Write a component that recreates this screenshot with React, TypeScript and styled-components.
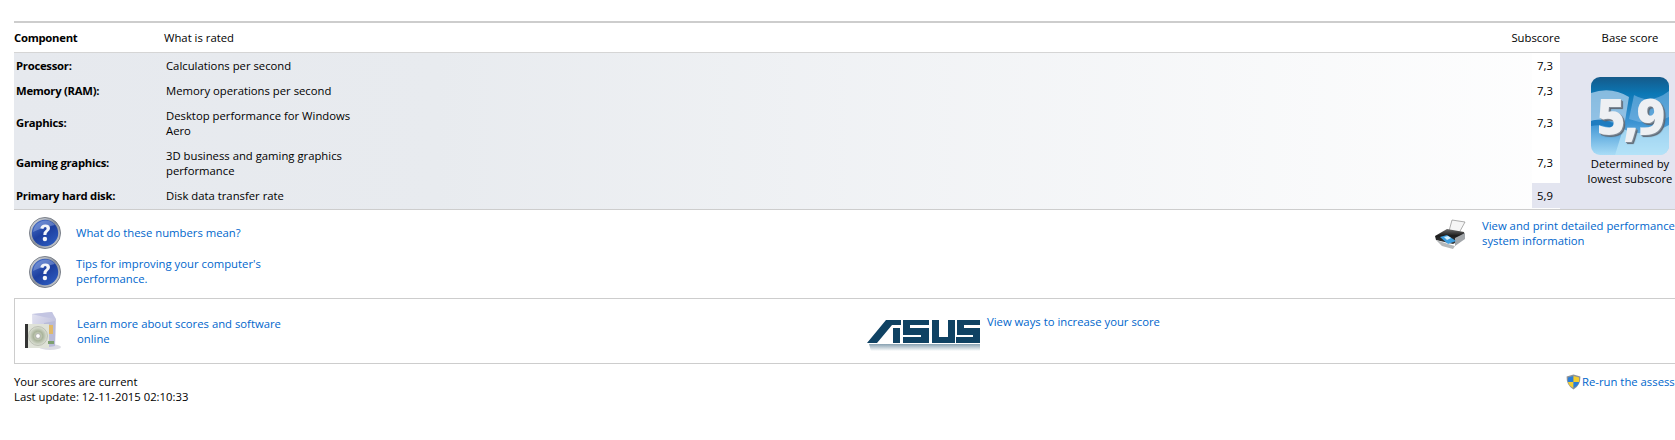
import React from "react";

import styled, { createGlobalStyle } from "styled-components";

const GlobalStyle = createGlobalStyle`
  html, body {
    margin: 0;
    padding: 0;
    background: #fff;
    overflow: hidden;
  }
  body {
    font-family: "Open Sans", "Noto Sans", sans-serif;
    font-size: 11.3px;
    line-height: 15px;
    color: #000;
  }
  svg {
    flex: none;
    display: block;
  }
`;

const Page = styled.div`
  width: 1700px;
  height: 440px;
  padding: 21px 0 0 14px;
  box-sizing: border-box;
  overflow: hidden;
`;

const ScoreTable = styled.div`
  display: grid;
  grid-template-columns: 150px 202px 1fr 28px 140px;
  grid-template-rows: 30px 25px 25px 40px 40px 25px;
  padding-bottom: 1px;
  border-top: 2px solid #cdcdcd;
  border-bottom: 1px solid #cdcdcd;
  background:
    linear-gradient(#fff, #fff) top / 100% 30px no-repeat,
    linear-gradient(90deg, #e6e9ee 0%, #e8ebef 25%, #fff 96%);
`;

const HeadCell = styled.div<{ $bold?: boolean; $align?: string }>`
  display: flex;
  align-items: center;
  justify-content: ${(p) => p.$align || "flex-start"};
  white-space: nowrap;
  font-weight: ${(p) => (p.$bold ? 700 : 400)};
  letter-spacing: ${(p) => (p.$bold ? "-0.27px" : "0")};
  border-bottom: 1px solid #d5d5d5;
`;

const NameCell = styled.div<{ $tall?: boolean }>`
  display: flex;
  align-items: center;
  padding: 0 0 ${(p) => (p.$tall ? "1px" : "0")} 2px;
  font-weight: 700;
  letter-spacing: -0.27px;
`;

const RatedCell = styled.div`
  display: flex;
  align-items: center;
  padding-left: 2px;
`;

const Filler = styled.div``;

const ScoreCell = styled.div<{ $lowest?: boolean; $tall?: boolean }>`
  display: flex;
  align-items: center;
  padding: 0 0 ${(p) => (p.$tall ? "1px" : "0")} 5px;
  background: ${(p) => (p.$lowest ? "#e3e5f0" : "#fff")};
`;

const BasePanel = styled.div`
  grid-column: 5;
  grid-row: 2 / span 5;
  background: #e3e5f0;
  display: flex;
  flex-direction: column;
  align-items: center;
  padding-top: 24px;
  margin-bottom: -1px;
  text-align: center;
`;

const Tile = styled.div`
  position: relative;
  width: 78px;
  height: 78px;
  border-radius: 9px;
  overflow: hidden;
  margin-bottom: 1px;
`;

const TileNumber = styled.span`
  position: absolute;
  left: 0;
  right: 0;
  top: 8px;
  text-align: center;
  font-family: "Open Sans", sans-serif;
  font-weight: 800;
  font-size: 49px;
  line-height: 62px;
  letter-spacing: -2px;
  color: #eef0f3;
  text-shadow: 1px 1px 0 #7f8a96, 2px 2px 1px #5c6570;
`;

const LinkRows = styled.div`
  display: flex;
  justify-content: space-between;
  height: 88px;
`;

const LinkColumn = styled.div`
  display: flex;
  flex-direction: column;
  gap: 7px;
  padding: 7px 0 0 15px;
`;

const LinkItem = styled.div`
  display: flex;
  align-items: center;
  gap: 15px;
  height: 32px;

  a {
    margin-top: -2px;
  }
`;

const PrintLink = styled.div`
  display: flex;
  align-items: flex-start;
  gap: 14px;
  padding-top: 9px;
  width: 266px;
  flex: none;
  white-space: nowrap;

  a {
    margin-top: -1px;
  }
`;

const Anchor = styled.a<{ $width?: number }>`
  color: #0066cc;
  text-decoration: none;
  display: block;
  max-width: ${(p) => (p.$width ? `${p.$width}px` : "none")};
`;

const PromoBox = styled.div`
  display: flex;
  height: 64px;
  border: 1px solid #cdcdcd;
  border-right: none;
  padding-left: 9px;
`;

const PromoLeft = styled.div`
  display: flex;
  align-items: center;
  gap: 15px;
  width: 843px;
  flex: none;
`;

const PromoRight = styled.div`
  display: flex;
  align-items: flex-start;
  gap: 7px;
  padding-top: 15px;

  svg {
    margin-top: 5px;
  }
`;

const Footer = styled.div`
  display: flex;
  justify-content: space-between;
  padding-top: 10px;
`;

const Rerun = styled.div`
  display: flex;
  align-items: flex-start;
  gap: 1px;
  width: 134px;
  white-space: nowrap;
  flex: none;
`;

const HelpIcon = () => (
  <svg width="32" height="32" viewBox="0 0 32 32">
    <defs>
      <linearGradient id="helpRing" x1="0" y1="0" x2="1" y2="1">
        <stop offset="0" stopColor="#e4e6ea" />
        <stop offset="0.5" stopColor="#8b919b" />
        <stop offset="1" stopColor="#d5d8dd" />
      </linearGradient>
      <linearGradient id="helpFill" x1="0.1" y1="0" x2="0.8" y2="1">
        <stop offset="0" stopColor="#4a73cc" />
        <stop offset="0.5" stopColor="#1d3f9f" />
        <stop offset="1" stopColor="#2d5cc0" />
      </linearGradient>
    </defs>
    <circle cx="16" cy="16" r="15.6" fill="url(#helpRing)" stroke="#5c636e" strokeWidth="0.7" />
    <circle cx="16" cy="16" r="13.2" fill="url(#helpFill)" />
    <path d="M4 15 A12.5 12.5 0 0 1 26 8 Q14 10 4 15Z" fill="#9db4e6" opacity="0.45" />
    <path
      d="M11.3 11.2 Q12 7.4 16.3 7.4 Q21 7.6 21 11.2 Q21 13.6 18.7 15 Q17.4 15.9 17.4 18 L14.3 18 Q14.1 15 16.2 13.6 Q17.8 12.5 17.6 11.2 Q17.3 9.9 16 10 Q14.8 10 14.4 11.9Z"
      fill="#f4f6fa"
    />
    <circle cx="15.9" cy="22" r="2.2" fill="#f4f6fa" />
  </svg>
);

const PrinterIcon = () => (
  <svg width="34" height="30" viewBox="0 0 34 30">
    <defs>
      <linearGradient id="printerBody" x1="0" y1="0" x2="0" y2="1">
        <stop offset="0" stopColor="#6c6c6c" />
        <stop offset="0.45" stopColor="#1c1c1c" />
        <stop offset="1" stopColor="#3c3f42" />
      </linearGradient>
    </defs>
    <path d="M18 1 L31 3 L25 14 L15 12Z" fill="#f5f5f5" stroke="#8d8d8d" strokeWidth="0.7" />
    <path d="M1 17 L13 10 L30 13 L31 19 L19 25 L2 21Z" fill="url(#printerBody)" />
    <path d="M21 19 L31 14 V20 L21 27Z" fill="#a2a6aa" />
    <path d="M6 18 L13 16 L22 22 L14 25Z" fill="#3d9ee0" />
    <path d="M10 18 L14 17 L17 19 L13 21Z" fill="#d5effc" />
    <path d="M2 21 L14 25 L21 27 L19 30 L8 27Z" fill="#b5b8ba" />
  </svg>
);

const BoxIcon = () => (
  <svg width="38" height="40" viewBox="0 0 38 40">
    <defs>
      <linearGradient id="boxFace" x1="0" y1="0" x2="1" y2="1">
        <stop offset="0" stopColor="#e4e4f2" />
        <stop offset="1" stopColor="#aeb0d2" />
      </linearGradient>
      <radialGradient id="boxDisc">
        <stop offset="0" stopColor="#eef2e0" />
        <stop offset="0.5" stopColor="#a9b39b" />
        <stop offset="1" stopColor="#dfe3d8" />
      </radialGradient>
    </defs>
    <ellipse cx="26" cy="36" rx="11" ry="3" fill="#dcdce4" />
    <path d="M8 3 L28 1 L32 8 L31 35 L9 37Z" fill="url(#boxFace)" />
    <path d="M8 3 L20 6 L31 8 L28 1Z" fill="#c3c5e2" />
    <path d="M20 12 L31 10 L31 35 L22 36Z" fill="#b9bbd8" />
    <rect x="1" y="13" width="24" height="24" fill="#dfe2d8" />
    <rect x="1" y="13" width="3" height="24" fill="#333" />
    <circle cx="14" cy="25" r="9.5" fill="url(#boxDisc)" stroke="#9a9f90" strokeWidth="0.5" />
    <circle cx="14" cy="25" r="2.4" fill="#fff" stroke="#888" strokeWidth="0.6" />
    <rect x="25" y="14" width="4" height="9" fill="#e0b96a" />
    <rect x="24" y="30" width="6" height="3" fill="#7fa070" />
  </svg>
);

const ShieldIcon = () => (
  <svg width="15" height="16" viewBox="0 0 15 16">
    <path d="M7.5 0.4 L14.4 2.4 Q14.8 11 7.5 15.6 Q0.2 11 0.6 2.4Z" fill="#8f9499" />
    <path d="M7.5 2 V8 H2 Q1.8 5.5 2 3.4Z" fill="#2c7fd8" />
    <path d="M7.5 2 L13 3.4 Q13.2 5.5 13 8 H7.5Z" fill="#f4cf2f" />
    <path d="M7.5 8 H2 Q2.8 11.8 7.5 14Z" fill="#f4cf2f" />
    <path d="M7.5 8 H13 Q12.2 11.8 7.5 14Z" fill="#2c7fd8" />
  </svg>
);

const AsusLogo = () => (
  <svg width="113" height="32" viewBox="0 0 113 32">
    <defs>
      <linearGradient id="asusFade" x1="0" y1="0" x2="0" y2="1">
        <stop offset="0" stopColor="#0f4263" stopOpacity="0.5" />
        <stop offset="1" stopColor="#0f4263" stopOpacity="0" />
      </linearGradient>
    </defs>
    <g fill="#0f4263">
      <path d="M0 24 L19 1 H34 V6 H25 L10 24Z" />
      <rect x="26" y="9" width="7" height="15" />
      <path d="M36 1 H62 V6 H43 V9 H62 V24 H36 V18 H54 V16 H36Z" />
      <path d="M65 1 H72 V18 H81 V1 H88 V24 H65Z" />
      <path d="M90 1 H113 V6 H97 V9 H113 V24 H89 V18 H106 V16 H90Z" />
    </g>
    <path d="M2 25 H113 V32 H4Z" fill="url(#asusFade)" />
  </svg>
);

const WindowsSwoosh = () => (
  <svg width="78" height="78" viewBox="0 0 78 78">
    <defs>
      <linearGradient id="tileBg" x1="0" y1="0" x2="0" y2="1">
        <stop offset="0" stopColor="#155a8a" />
        <stop offset="0.22" stopColor="#0b78b6" />
        <stop offset="0.6" stopColor="#3f95d4" />
        <stop offset="1" stopColor="#a9dcf6" />
      </linearGradient>
    </defs>
    <rect width="78" height="78" fill="url(#tileBg)" />
    <path d="M0 16 Q20 9 38 20 L33 50 Q16 40 0 44Z" fill="#a8cdea" opacity="0.8" />
    <path d="M43 18 Q60 28 78 14 V40 Q58 50 38 42Z" fill="#7fb8e4" opacity="0.6" />
    <path d="M0 44 Q14 40 28 50 L27 54 Q12 46 0 49Z" fill="#1f7cc0" />
    <path d="M32 52 Q54 62 78 48 V78 H24Z" fill="#b8e4f8" opacity="0.75" />
  </svg>
);

const rows = [
  { name: "Processor:", rated: "Calculations per second", score: "7,3" },
  { name: "Memory (RAM):", rated: "Memory operations per second", score: "7,3" },
  { name: "Graphics:", rated: "Desktop performance for Windows Aero", score: "7,3", tall: true },
  { name: "Gaming graphics:", rated: "3D business and gaming graphics performance", score: "7,3", tall: true },
  { name: "Primary hard disk:", rated: "Disk data transfer rate", score: "5,9", lowest: true },
];

const App = () => {
  return (
    <Page>
      <GlobalStyle />
      <ScoreTable>
        <HeadCell $bold>Component</HeadCell>
        <HeadCell>What is rated</HeadCell>
        <HeadCell />
        <HeadCell $align="flex-end">Subscore</HeadCell>
        <HeadCell $align="center">Base score</HeadCell>
        {rows.map((row) => (
          <React.Fragment key={row.name}>
            <NameCell $tall={row.tall}>{row.name}</NameCell>
            <RatedCell>{row.rated}</RatedCell>
            <Filler />
            <ScoreCell $lowest={row.lowest} $tall={row.tall}>{row.score}</ScoreCell>
          </React.Fragment>
        ))}
        <BasePanel>
          <Tile>
            <WindowsSwoosh />
            <TileNumber>5,9</TileNumber>
          </Tile>
          Determined by
          <br />
          lowest subscore
        </BasePanel>
      </ScoreTable>
      <LinkRows>
        <LinkColumn>
          <LinkItem>
            <HelpIcon />
            <Anchor>What do these numbers mean?</Anchor>
          </LinkItem>
          <LinkItem>
            <HelpIcon />
            <Anchor $width={205}>Tips for improving your computer's performance.</Anchor>
          </LinkItem>
        </LinkColumn>
        <PrintLink>
          <PrinterIcon />
          <Anchor>
            View and print detailed performance and
            <br />
            system information
          </Anchor>
        </PrintLink>
      </LinkRows>
      <PromoBox>
        <PromoLeft>
          <BoxIcon />
          <Anchor $width={215}>Learn more about scores and software online</Anchor>
        </PromoLeft>
        <PromoRight>
          <AsusLogo />
          <Anchor>View ways to increase your score</Anchor>
        </PromoRight>
      </PromoBox>
      <Footer>
        <div>
          Your scores are current
          <br />
          Last update: 12-11-2015 02:10:33
        </div>
        <Rerun>
          <ShieldIcon />
          <Anchor>Re-run the assessment</Anchor>
        </Rerun>
      </Footer>
    </Page>
  );
};

export default App;
